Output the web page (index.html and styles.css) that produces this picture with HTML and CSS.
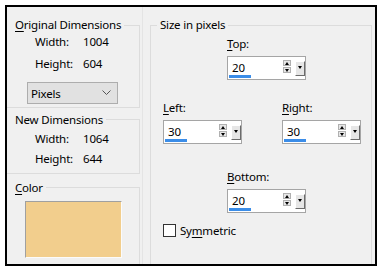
FILE: index.html
```html
<!DOCTYPE html>
<html lang="en">
<head>
    <meta charset="UTF-8">
    <title>Add Borders</title>
    <link rel="stylesheet" href="styles.css">
</head>
<body>
    <div class="frame">
        <div class="side">
            <div class="group g-orig">
                <div class="title"><u>O</u>riginal Dimensions</div>
                <div class="row"><span class="lbl">Width:</span><span>1004</span></div>
                <div class="row"><span class="lbl">Height:</span><span>604</span></div>
                <div class="select">
                    <span>Pixels</span>
                    <svg width="9" height="6" viewBox="0 0 9 6"><polyline points="0.5,0.5 4.5,4.5 8.5,0.5" fill="none" stroke="#555" stroke-width="1"/></svg>
                </div>
            </div>
            <div class="group g-new">
                <div class="title">New Dimensions</div>
                <div class="row"><span class="lbl">Width:</span><span>1064</span></div>
                <div class="row"><span class="lbl">Height:</span><span>644</span></div>
            </div>
            <div class="group g-color">
                <div class="title"><u>C</u>olor</div>
                <div class="swatch"></div>
            </div>
        </div>

        <div class="group size">
            <div class="title">Size in pixels</div>

            <div class="field f-top">
                <label><u>T</u>op:</label>
                <div class="spin">
                    <div class="spin-val"><span>20</span><i class="bar"></i></div>
                    <div class="spin-arrows"><b class="up"></b><b class="down"></b></div>
                    <div class="spin-drop"></div>
                </div>
            </div>

            <div class="pair">
                <div class="field">
                    <label><u>L</u>eft:</label>
                    <div class="spin">
                        <div class="spin-val"><span>30</span><i class="bar"></i></div>
                        <div class="spin-arrows"><b class="up"></b><b class="down"></b></div>
                        <div class="spin-drop"></div>
                    </div>
                </div>
                <div class="field">
                    <label><u>R</u>ight:</label>
                    <div class="spin">
                        <div class="spin-val"><span>30</span><i class="bar"></i></div>
                        <div class="spin-arrows"><b class="up"></b><b class="down"></b></div>
                        <div class="spin-drop"></div>
                    </div>
                </div>
            </div>

            <div class="field f-bottom">
                <label><u>B</u>ottom:</label>
                <div class="spin">
                    <div class="spin-val"><span>20</span><i class="bar"></i></div>
                    <div class="spin-arrows"><b class="up"></b><b class="down"></b></div>
                    <div class="spin-drop"></div>
                </div>
            </div>

            <label class="check"><span class="box"></span><span>Sy<u>m</u>metric</span></label>
        </div>
    </div>
</body>
</html>
```

FILE: styles.css
```css
body {
    margin: 0;
    background-color: #fff;
    font-family: "Segoe UI", "Noto Sans", sans-serif;
    font-size: 11.5px;
    letter-spacing: -0.2px;
    line-height: 15px;
    color: #000;
}
u {
    text-underline-offset: 2px;
}
.frame {
    margin: 5px 0 0 5px;
    width: 368px;
    height: 257px;
    border: 2px solid #000;
    background-color: #f0f0f0;
    display: flex;
    align-items: flex-start;
    overflow: hidden;
}
.group {
    border: 1px solid #dcdcdc;
    box-sizing: border-box;
}
.title {
    width: fit-content;
    background-color: #f0f0f0;
    padding: 0 3px;
    margin-top: -9px;
}

/* left column */
.side {
    width: 135px;
    height: 257px;
    border-right: 1px solid #e4e4e4;
    display: flex;
    flex-direction: column;
    flex-shrink: 0;
    overflow: hidden;
}
.side .group {
    border-left: none;
    width: 133px;
    flex-shrink: 0;
}
.side .title {
    padding-left: 8px;
}
.row {
    display: flex;
    padding-left: 28px;
}
.lbl {
    width: 48px;
}
.g-orig {
    margin-top: 18px;
    padding-bottom: 3px;
}
.g-orig .row {
    margin-top: 7px;
}
.g-orig .title + .row {
    margin-top: 2px;
}
.select {
    margin: 11px 0 0 20px;
    width: 91px;
    height: 22px;
    box-sizing: border-box;
    border: 1px solid #adadad;
    background-color: #e1e1e1;
    display: flex;
    align-items: center;
    justify-content: space-between;
    padding: 0 6px 0 3px;
}
.g-new {
    margin-top: 11px;
    padding-bottom: 7px;
}
.g-new .title {
    margin-top: -8px;
}
.g-new .row {
    margin-top: 5px;
}
.g-new .title + .row {
    margin-top: 4px;
}
.g-color {
    margin-top: 13px;
    height: 100px;
}
.g-color .title {
    margin-top: -8px;
}
.swatch {
    margin: 6px 0 0 18px;
    width: 97px;
    height: 57px;
    box-sizing: border-box;
    border: 1px solid;
    border-color: #a0a0a0 #fbfbfb #fbfbfb #a0a0a0;
    background-color: #f2ce8d;
}

/* size group */
.size {
    margin: 18px 0 0 7px;
    width: 222px;
    height: 260px;
    padding-left: 12px;
    flex-shrink: 0;
}
.size .title {
    margin-left: -6px;
}
.field label {
    display: block;
    margin-bottom: 5px;
}
.f-top {
    margin: 4px 0 0 64px;
}
.pair {
    display: flex;
    gap: 40px;
    margin-top: 20px;
}
.f-bottom {
    margin: 25px 0 0 64px;
}
.spin {
    width: 79px;
    height: 24px;
    box-sizing: border-box;
    border: 1px solid #a5a5a5;
    background-color: #fff;
    display: flex;
    align-items: flex-start;
}
.spin-val {
    width: 53px;
    display: flex;
    flex-direction: column;
}
.spin-val span {
    margin-top: 3px;
    padding-left: 4px;
}
.bar {
    display: block;
    width: 22px;
    height: 3px;
    margin-left: 1px;
    background-color: #3b8de8;
}
.spin-arrows {
    margin: 3px 0 0 2px;
    display: flex;
    flex-direction: column;
    gap: 1px;
}
.spin-arrows b {
    width: 8px;
    height: 6px;
    box-sizing: border-box;
    border: 1px solid #b0b0b0;
    background-color: #e6e6e6;
    display: flex;
    align-items: center;
    justify-content: center;
}
.spin-arrows .up::after {
    content: "";
    border-left: 2px solid transparent;
    border-right: 2px solid transparent;
    border-bottom: 3px solid #000;
}
.spin-arrows .down::after {
    content: "";
    border-left: 2px solid transparent;
    border-right: 2px solid transparent;
    border-top: 3px solid #000;
}
.spin-drop {
    margin: 4px 0 0 4px;
    width: 10px;
    height: 15px;
    box-sizing: border-box;
    border: 1px solid;
    border-color: #fff #6b6b6b #6b6b6b #fff;
    background-color: #e6e6e6;
    display: flex;
    justify-content: center;
    padding-top: 4px;
}
.spin-drop::after {
    content: "";
    width: 0;
    height: 0;
    border-left: 2px solid transparent;
    border-right: 2px solid transparent;
    border-top: 3px solid #000;
}
.check {
    display: flex;
    align-items: center;
    gap: 4px;
    margin-top: 10px;
}
.check .box {
    width: 13px;
    height: 13px;
    box-sizing: border-box;
    border: 1px solid #333;
    background-color: #fff;
}
```
